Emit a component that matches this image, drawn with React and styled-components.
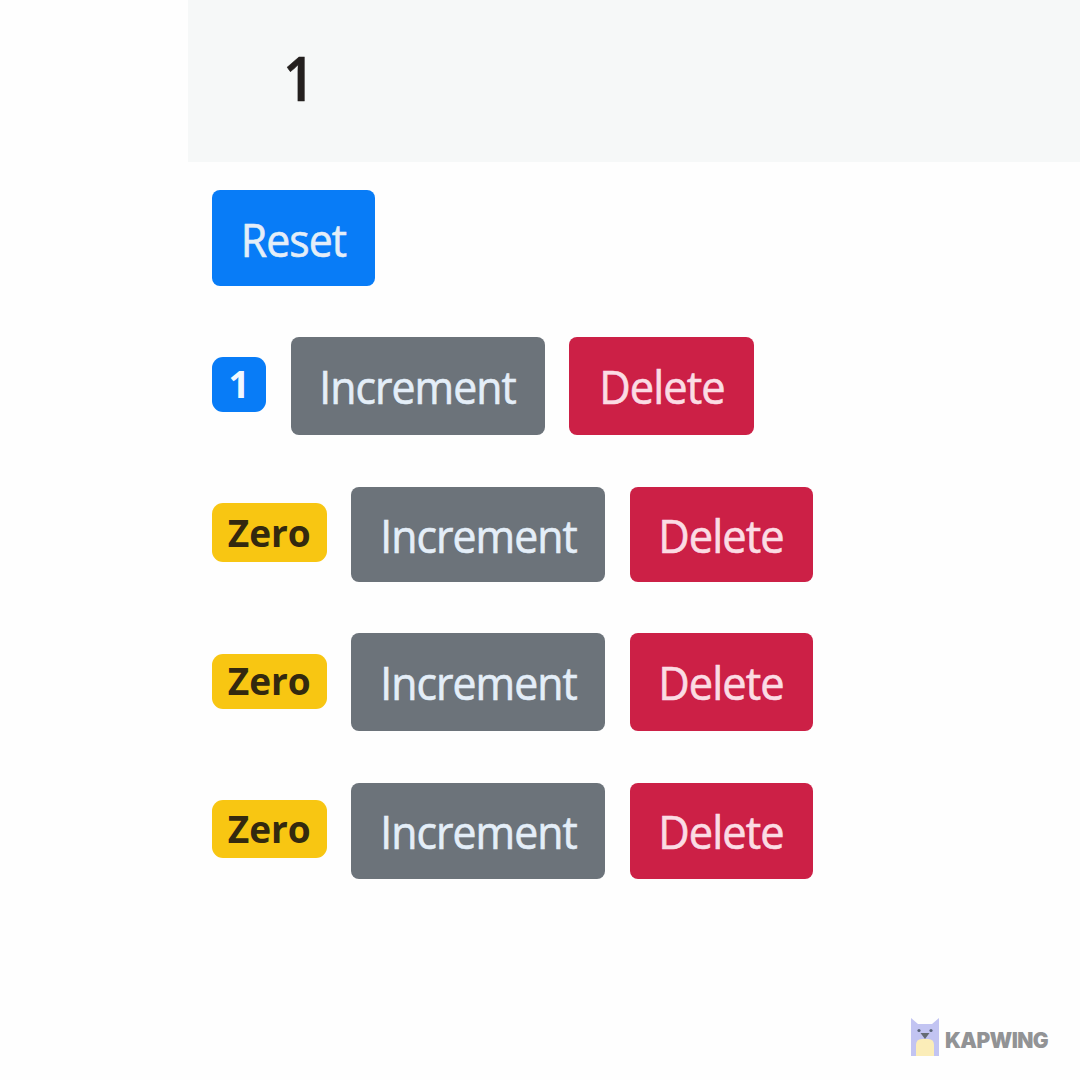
import React from 'react';
import styled, { createGlobalStyle } from 'styled-components';

const GlobalStyle = createGlobalStyle`
  * { box-sizing: border-box; }
  body {
    margin: 0;
    background: #fefefe;
    font-family: "Open Sans", "Noto Sans", sans-serif;
  }
`;

const Page = styled.div`
  display: flex;
  flex-direction: column;
  width: 1080px;
  height: 1080px;
  overflow: hidden;
`;

const Navbar = styled.header`
  flex: none;
  height: 162px;
  margin-left: 188px;
  padding: 35px 0 0 95px;
  background: #f6f8f8;
  color: #24201f;
  font-size: 62px;
  font-weight: 600;
  line-height: 84px;
`;

const Count = styled.span`
  display: inline-block;
  transform: scaleX(0.9);
  transform-origin: left;
  -webkit-text-stroke: 0.5px currentColor;
`;

const Content = styled.main`
  display: flex;
  flex-direction: column;
  align-items: flex-start;
  flex: 1;
  padding: 28px 0 0 212px;
`;

const tones = {
  primary: '#087cf7',
  secondary: '#6c737a',
  danger: '#cc2046',
};

const Button = styled.button`
  display: flex;
  justify-content: center;
  flex: none;
  width: ${(p) => p.$width}px;
  height: ${(p) => p.$height}px;
  padding: ${(p) => p.$inset || 18}px 0 0;
  border: 0;
  border-radius: 8px;
  background: ${(p) => tones[p.$tone]};
  color: ${(p) => (p.$tone === 'danger' ? '#fbdce4' : '#e4eef8')};
  font-family: inherit;
  font-size: 45px;
  line-height: 64px;
  letter-spacing: -1px;
  white-space: nowrap;
`;

const Label = styled.span`
  flex: none;
  transform: scaleX(${(p) => p.$stretch});
  -webkit-text-stroke: 0.6px currentColor;
`;

const Row = styled.div`
  display: flex;
  align-items: flex-start;
  gap: 24.5px;
  margin-top: ${(p) => p.$gap}px;
`;

const Badge = styled.span`
  display: flex;
  justify-content: center;
  flex: none;
  width: ${(p) => (p.$zero ? 114.5 : 54)}px;
  height: ${(p) => p.$height}px;
  margin-top: ${(p) => p.$drop}px;
  padding-top: ${(p) => p.$inset}px;
  border-radius: 11px;
  background: ${(p) => (p.$zero ? '#f8c612' : '#087cf7')};
  color: ${(p) => (p.$zero ? '#33290f' : '#f1f8ff')};
  font-size: 37px;
  font-weight: 700;
  line-height: 50px;
`;

const Brand = styled.footer`
  display: flex;
  align-items: flex-start;
  align-self: flex-end;
  gap: 6px;
  height: 62px;
  margin-right: 32px;
`;

const BrandName = styled.span`
  width: 103px;
  padding-top: 9px;
  color: #929395;
  font-family: Inter, sans-serif;
  font-size: 21px;
  font-weight: 900;
  line-height: 28px;
  letter-spacing: -0.6px;
  white-space: nowrap;
`;

const Cat = () => (
  <svg width="28" height="38" viewBox="0 0 28 38" aria-hidden="true">
    <path d="M0 0L7 6H21L28 0V38H0Z" fill="#c2c4f2" />
    <path d="M5 38V27Q5 21 11 21H17Q23 21 23 27V38Z" fill="#fbedb8" />
    <circle cx="8" cy="12.5" r="1.6" fill="#596479" />
    <circle cx="20" cy="12.5" r="1.6" fill="#596479" />
    <path d="M9.5 15H18.5L14 21Z" fill="#646a73" />
  </svg>
);

const counters = [
  { value: 1, gap: 51, height: 98, drop: 20, badge: 55, inset: 2, text: 18, remove: 185 },
  { value: 0, gap: 52, height: 95, drop: 16, badge: 59, inset: 5, text: 17, remove: 183 },
  { value: 0, gap: 51, height: 98, drop: 21, badge: 55, inset: 2, text: 18, remove: 183 },
  { value: 0, gap: 52, height: 96, drop: 17, badge: 58, inset: 4, text: 17, remove: 183 },
];

export default function App() {
  return (
    <>
      <GlobalStyle />
      <Page>
        <Navbar><Count>{counters.filter((c) => c.value > 0).length}</Count></Navbar>
        <Content>
          <Button $tone="primary" $width={163} $height={96}>
            <Label $stretch={0.95}>Reset</Label>
          </Button>
          {counters.map((c, i) => (
            <Row key={i} $gap={c.gap}>
              <Badge $zero={c.value === 0} $height={c.badge} $drop={c.drop} $inset={c.inset}>
                {c.value === 0 ? 'Zero' : c.value}
              </Badge>
              <Button $tone="secondary" $width={254} $height={c.height} $inset={c.text}>
                <Label $stretch={0.95}>Increment</Label>
              </Button>
              <Button $tone="danger" $width={c.remove} $height={c.height} $inset={c.text}>
                <Label $stretch={0.965}>Delete</Label>
              </Button>
            </Row>
          ))}
        </Content>
        <Brand>
          <Cat />
          <BrandName>KAPWING</BrandName>
        </Brand>
      </Page>
    </>
  );
}
